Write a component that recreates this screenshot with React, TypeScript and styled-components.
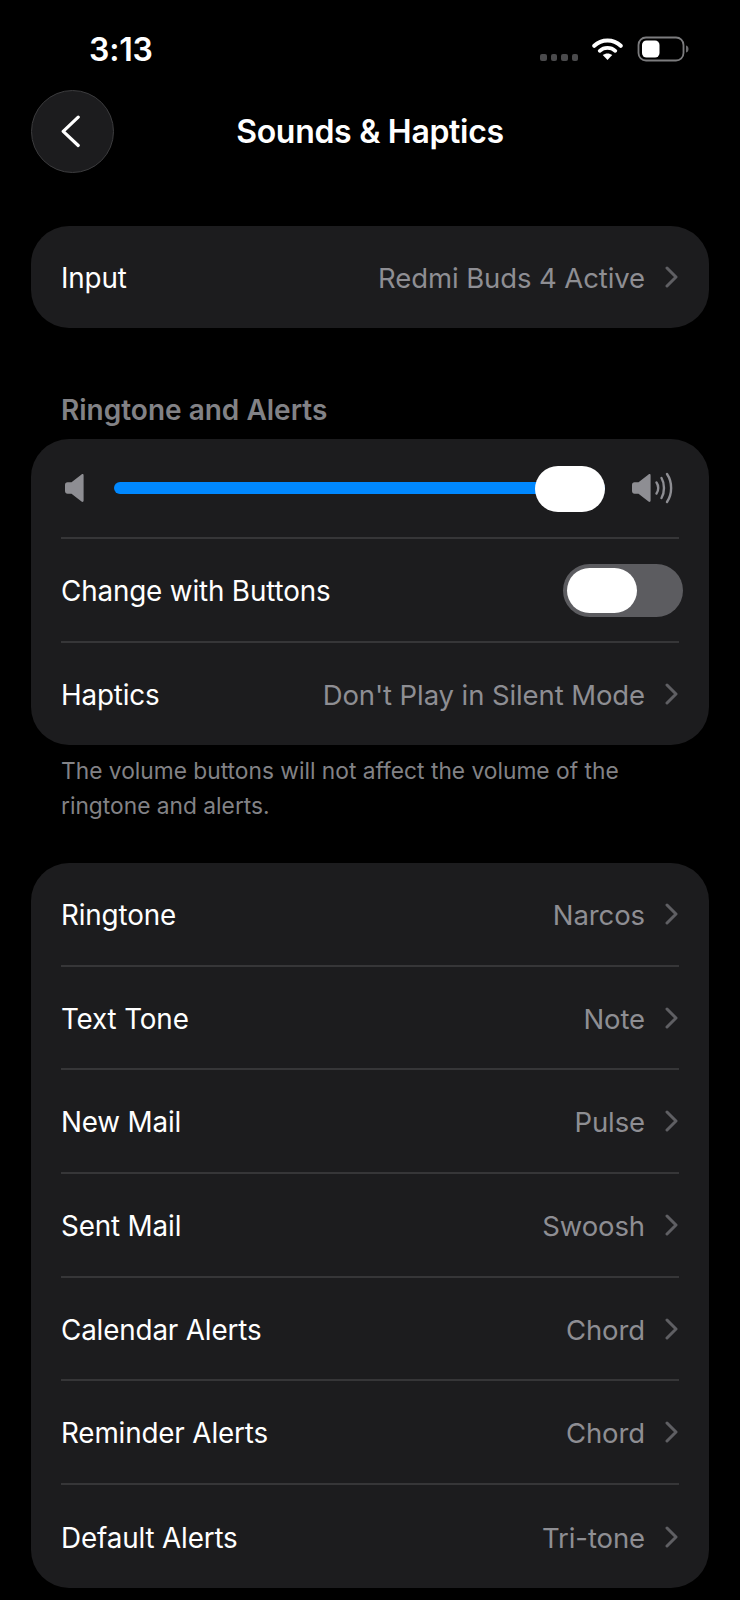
import React from "react";
import styled, { createGlobalStyle } from "styled-components";

const Global = createGlobalStyle`
  html, body { margin: 0; padding: 0; background: #000; }
  body { font-family: Inter, "Liberation Sans", sans-serif; color: #fff; -webkit-font-smoothing: antialiased; }
`;

const Screen = styled.div`
  width: 740px;
  height: 1600px;
  overflow: hidden;
  background: #000;
  box-sizing: border-box;
  padding: 0 31px;
  display: flex;
  flex-direction: column;
`;

const StatusBar = styled.div`
  height: 90px;
  display: flex;
  align-items: flex-start;
  justify-content: space-between;
  padding: 31px 18px 0 58px;
  box-sizing: border-box;
`;

const Time = styled.div`
  font-size: 32px;
  line-height: 38px;
  font-weight: 600;
  letter-spacing: -0.2px;
`;

const StatusIcons = styled.div`
  display: flex;
  align-items: center;
  gap: 14px;
  margin-top: 5px;
`;

const Dots = styled.div`
  display: flex;
  gap: 4px;
  margin-top: 17px;
`;

const Dot = styled.span`
  width: 6.5px;
  height: 6.5px;
  border-radius: 2px;
  background: #4a4a4c;
`;

const Header = styled.div`
  height: 82px;
  display: flex;
  align-items: center;
  position: relative;
  margin-bottom: 54px;
`;

const BackButton = styled.div`
  width: 83px;
  height: 83px;
  border-radius: 50%;
  background: #1c1c1e;
  border: 1px solid #3c3c3e;
  box-sizing: border-box;
  display: flex;
  align-items: center;
  justify-content: center;
`;

const Title = styled.div`
  position: absolute;
  left: 0;
  right: 0;
  text-align: center;
  font-size: 32px;
  font-weight: 600;
  letter-spacing: -0.3px;
`;

const Card = styled.div`
  background: #1c1c1e;
  border-radius: 38px;
  padding: 0 30px;
  display: flex;
  flex-direction: column;
`;

const Row = styled.div<{ $h?: number; $divider?: boolean }>`
  height: ${(p) => p.$h ?? 102}px;
  display: flex;
  align-items: center;
  justify-content: space-between;
  box-sizing: border-box;
  flex: none;
  border-bottom: ${(p) => (p.$divider ? "2px solid #363638" : "none")};
`;

const Label = styled.div`
  font-size: 27.8px;
  letter-spacing: -0.15px;
  padding-top: 2px;
  color: #fff;
`;

const Value = styled.div`
  display: flex;
  align-items: center;
  gap: 20px;
  font-size: 27.5px;
  letter-spacing: -0.1px;
  color: #8e8e93;
`;

const ValueText = styled.span`
  padding-top: 2px;
`;

const SectionTitle = styled.div`
  margin: 64px 0 11px 30px;
  font-size: 28px;
  line-height: 36px;
  font-weight: 600;
  color: #828286;
`;

const Track = styled.div`
  flex: 1;
  height: 12px;
  border-radius: 6px;
  background: #0088ff;
  position: relative;
`;

const Thumb = styled.div`
  position: absolute;
  right: 0;
  top: -16px;
  width: 70px;
  height: 46px;
  border-radius: 23px;
  background: #fff;
`;

const SliderRow = styled(Row)`
  gap: 26px;
`;

const LowEnd = styled.div`
  display: flex;
  flex: none;
  width: 27px;
`;

const HighEnd = styled.div`
  display: flex;
  flex: none;
  margin-right: 4px;
`;

const Toggle = styled.div`
  width: 120px;
  height: 53px;
  border-radius: 27px;
  background: #5c5c60;
  position: relative;
  flex: none;
  margin-right: -4px;
`;

const Knob = styled.div`
  position: absolute;
  left: 4px;
  top: 4px;
  width: 70px;
  height: 45px;
  border-radius: 23px;
  background: #fff;
`;

const Footnote = styled.div`
  margin: 8px 30px 40px 30px;
  font-size: 22.75px;
  line-height: 35px;
  color: #828286;
`;

const Chevron = () => (
  <svg width="14" height="24" viewBox="0 0 14 24" fill="none">
    <path d="M2 3l9 9L2 21" stroke="#5f5f63" strokeWidth="3" strokeLinecap="round" strokeLinejoin="round" />
  </svg>
);

const Disclosure = ({ children }: { children: React.ReactNode }) => (
  <Value>
    <ValueText>{children}</ValueText>
    <Chevron />
  </Value>
);

const speaker = "M1 12C1 10.4 2 9.3 3.5 9.3H7.5L17.5 1.4C18.6 0.6 19.6 1 19.6 2.4V27.6C19.6 29 18.6 29.4 17.5 28.6L7.5 20.7H3.5C2 20.7 1 19.6 1 18Z";

const rows: [string, string][] = [
  ["Ringtone", "Narcos"],
  ["Text Tone", "Note"],
  ["New Mail", "Pulse"],
  ["Sent Mail", "Swoosh"],
  ["Calendar Alerts", "Chord"],
  ["Reminder Alerts", "Chord"],
  ["Default Alerts", "Tri-tone"],
];

export default function App() {
  return (
    <Screen>
      <Global />
      <StatusBar>
        <Time>3:13</Time>
        <StatusIcons>
          <Dots>
            <Dot /><Dot /><Dot /><Dot />
          </Dots>
          <svg width="31" height="24" viewBox="0 0 34 26" fill="none">
            <path d="M2.5 9.5C10.5 1.8 23.5 1.8 31.5 9.5" stroke="#fff" strokeWidth="4.4" strokeLinecap="round" />
            <path d="M8.5 15C13.3 10.8 20.7 10.8 25.5 15" stroke="#fff" strokeWidth="4.2" strokeLinecap="round" />
            <path d="M17 25L11.8 19.6C14.8 17.2 19.2 17.2 22.2 19.6Z" fill="#fff" />
          </svg>
          <svg width="54" height="26" viewBox="0 0 54 26" fill="none">
            <rect x="1.5" y="1.5" width="45" height="23" rx="7.5" stroke="#7c7c7e" strokeWidth="1.8" />
            <rect x="5" y="4.5" width="17.5" height="17" rx="4.5" fill="#fff" />
            <path d="M49 9.5C51 10 51.5 11.5 51.5 13C51.5 14.5 51 16 49 16.5Z" fill="#6c6c6e" />
          </svg>
        </StatusIcons>
      </StatusBar>
      <Header>
        <BackButton>
          <svg width="24" height="36" viewBox="0 0 24 36" fill="none">
            <path d="M17.2 4.2L2.2 18.3L17.2 32.5" stroke="#fff" strokeWidth="3.2" strokeLinecap="round" strokeLinejoin="round" />
          </svg>
        </BackButton>
        <Title>Sounds &amp; Haptics</Title>
      </Header>

      <Card>
        <Row>
          <Label>Input</Label>
          <Disclosure>Redmi Buds 4 Active</Disclosure>
        </Row>
      </Card>

      <SectionTitle>Ringtone and Alerts</SectionTitle>
      <Card>
        <SliderRow $h={100} $divider>
          <LowEnd>
            <svg width="26" height="30" viewBox="0 0 20 30" fill="#8e8e93"><path d={speaker} /></svg>
          </LowEnd>
          <Track><Thumb /></Track>
          <HighEnd>
            <svg width="44" height="32" viewBox="0 0 44 32" fill="none">
              <path d={speaker} fill="#8e8e93" transform="translate(0 1)" />
              <path d="M25.5 10.5C27.8 13.5 27.8 18.5 25.5 21.5" stroke="#8e8e93" strokeWidth="2.4" strokeLinecap="round" />
              <path d="M30.5 6C33.8 11.5 33.8 20.5 30.5 26" stroke="#8e8e93" strokeWidth="2.4" strokeLinecap="round" />
              <path d="M36 2C41.5 10 41.5 22 36 30" stroke="#8e8e93" strokeWidth="2.4" strokeLinecap="round" />
            </svg>
          </HighEnd>
        </SliderRow>
        <Row $h={104} $divider>
          <Label>Change with Buttons</Label>
          <Toggle><Knob /></Toggle>
        </Row>
        <Row $h={102}>
          <Label>Haptics</Label>
          <Disclosure>Don&apos;t Play in Silent Mode</Disclosure>
        </Row>
      </Card>
      <Footnote>The volume buttons will not affect the volume of the ringtone and alerts.</Footnote>

      <Card>
        {rows.map(([label, value], i) => (
          <Row key={label} $h={i === rows.length - 1 ? 103 : 103.7} $divider={i !== rows.length - 1}>
            <Label>{label}</Label>
            <Disclosure>{value}</Disclosure>
          </Row>
        ))}
      </Card>
    </Screen>
  );
}
